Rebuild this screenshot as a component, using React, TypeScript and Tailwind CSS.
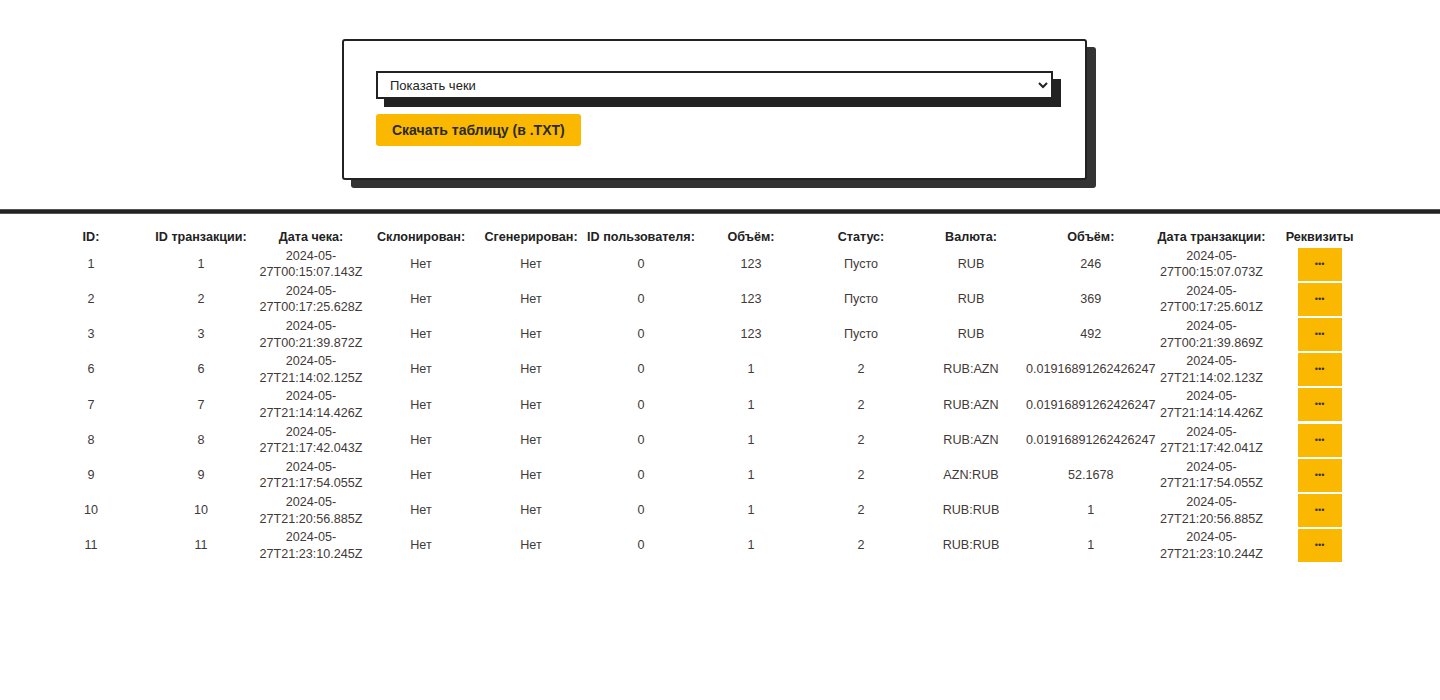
import { useState } from 'react';

interface Check {
  id: number;
  trId: number;
  date: [string, string];
  user: number;
  amount: string;
  status: string;
  currency: string;
  total: string;
  trDate: [string, string];
}

const rows: Check[] = [
  { id: 1, trId: 1, date: ['2024-05-', '27T00:15:07.143Z'], user: 0, amount: '123', status: 'Пусто', currency: 'RUB', total: '246', trDate: ['2024-05-', '27T00:15:07.073Z'] },
  { id: 2, trId: 2, date: ['2024-05-', '27T00:17:25.628Z'], user: 0, amount: '123', status: 'Пусто', currency: 'RUB', total: '369', trDate: ['2024-05-', '27T00:17:25.601Z'] },
  { id: 3, trId: 3, date: ['2024-05-', '27T00:21:39.872Z'], user: 0, amount: '123', status: 'Пусто', currency: 'RUB', total: '492', trDate: ['2024-05-', '27T00:21:39.869Z'] },
  { id: 6, trId: 6, date: ['2024-05-', '27T21:14:02.125Z'], user: 0, amount: '1', status: '2', currency: 'RUB:AZN', total: '0.01916891262426247', trDate: ['2024-05-', '27T21:14:02.123Z'] },
  { id: 7, trId: 7, date: ['2024-05-', '27T21:14:14.426Z'], user: 0, amount: '1', status: '2', currency: 'RUB:AZN', total: '0.01916891262426247', trDate: ['2024-05-', '27T21:14:14.426Z'] },
  { id: 8, trId: 8, date: ['2024-05-', '27T21:17:42.043Z'], user: 0, amount: '1', status: '2', currency: 'RUB:AZN', total: '0.01916891262426247', trDate: ['2024-05-', '27T21:17:42.041Z'] },
  { id: 9, trId: 9, date: ['2024-05-', '27T21:17:54.055Z'], user: 0, amount: '1', status: '2', currency: 'AZN:RUB', total: '52.1678', trDate: ['2024-05-', '27T21:17:54.055Z'] },
  { id: 10, trId: 10, date: ['2024-05-', '27T21:20:56.885Z'], user: 0, amount: '1', status: '2', currency: 'RUB:RUB', total: '1', trDate: ['2024-05-', '27T21:20:56.885Z'] },
  { id: 11, trId: 11, date: ['2024-05-', '27T21:23:10.245Z'], user: 0, amount: '1', status: '2', currency: 'RUB:RUB', total: '1', trDate: ['2024-05-', '27T21:23:10.244Z'] },
];

const headers = [
  'ID:',
  'ID транзакции:',
  'Дата чека:',
  'Склонирован:',
  'Сгенерирован:',
  'ID пользователя:',
  'Объём:',
  'Статус:',
  'Валюта:',
  'Объём:',
  'Дата транзакции:',
  'Реквизиты',
];

const App = () => {
  const [mode, setMode] = useState('checks');

  return (
    <div className="min-h-[700px] bg-white font-['Liberation_Sans',Arial,sans-serif]">
      {/* Панель управления */}
      <div className="flex justify-center pt-[39px] pb-[29px] pr-[11px]">
        <div className="w-[745px] border-2 border-[#222] rounded-[3px] bg-white px-8 pt-[30px] pb-8 shadow-[9px_8px_0_0_#333]">
          <select
            value={mode}
            onChange={(e) => setMode(e.target.value)}
            className="block w-full h-[28px] border-2 border-[#222] bg-white pl-[8px] pr-1 text-[13px] text-[#222] shadow-[8px_8px_0_0_#222] outline-none"
          >
            <option value="checks">Показать чеки</option>
            <option value="transactions">Показать транзакции</option>
          </select>
          <button className="mt-[15px] h-[32px] px-4 rounded-[3px] bg-[#fbb800] text-[14px] font-bold text-[#2a2a2a]">
            Скачать таблицу (в .TXT)
          </button>
        </div>
      </div>

      <div className="h-[5px] bg-[#222] border-y border-[#555]" />

      {/* Таблица чеков */}
      <table className="ml-[36px] mt-[14px] table-fixed text-[12.6px] leading-[16.6px] text-[#3f3a37]">
        <colgroup>
          {[110, 110, 110, 110, 110, 110, 110, 110, 110, 128, 112, 104].map((w, i) => (
            <col key={i} style={{ width: w }} />
          ))}
        </colgroup>
        <thead>
          <tr>
            {headers.map((h, i) => (
              <th key={i} className="py-px font-bold text-[#222] whitespace-nowrap">
                {h}
              </th>
            ))}
          </tr>
        </thead>
        <tbody>
          {rows.map((r) => (
            <tr key={r.id} className="text-center">
              <td className="py-px">{r.id}</td>
              <td className="py-px">{r.trId}</td>
              <td className="py-px">
                {r.date[0]}
                <br />
                {r.date[1]}
              </td>
              <td className="py-px">Нет</td>
              <td className="py-px">Нет</td>
              <td className="py-px">{r.user}</td>
              <td className="py-px">{r.amount}</td>
              <td className="py-px">{r.status}</td>
              <td className="py-px">{r.currency}</td>
              <td className="py-px whitespace-nowrap">{r.total}</td>
              <td className="py-px">
                {r.trDate[0]}
                <br />
                {r.trDate[1]}
              </td>
              <td className="py-px">
                <button className="mx-auto flex h-[33px] w-[44px] items-center justify-center bg-[#fbb800] text-[9px] leading-none text-[#333]">
                  •••
                </button>
              </td>
            </tr>
          ))}
        </tbody>
      </table>
    </div>
  );
};

export default App;
